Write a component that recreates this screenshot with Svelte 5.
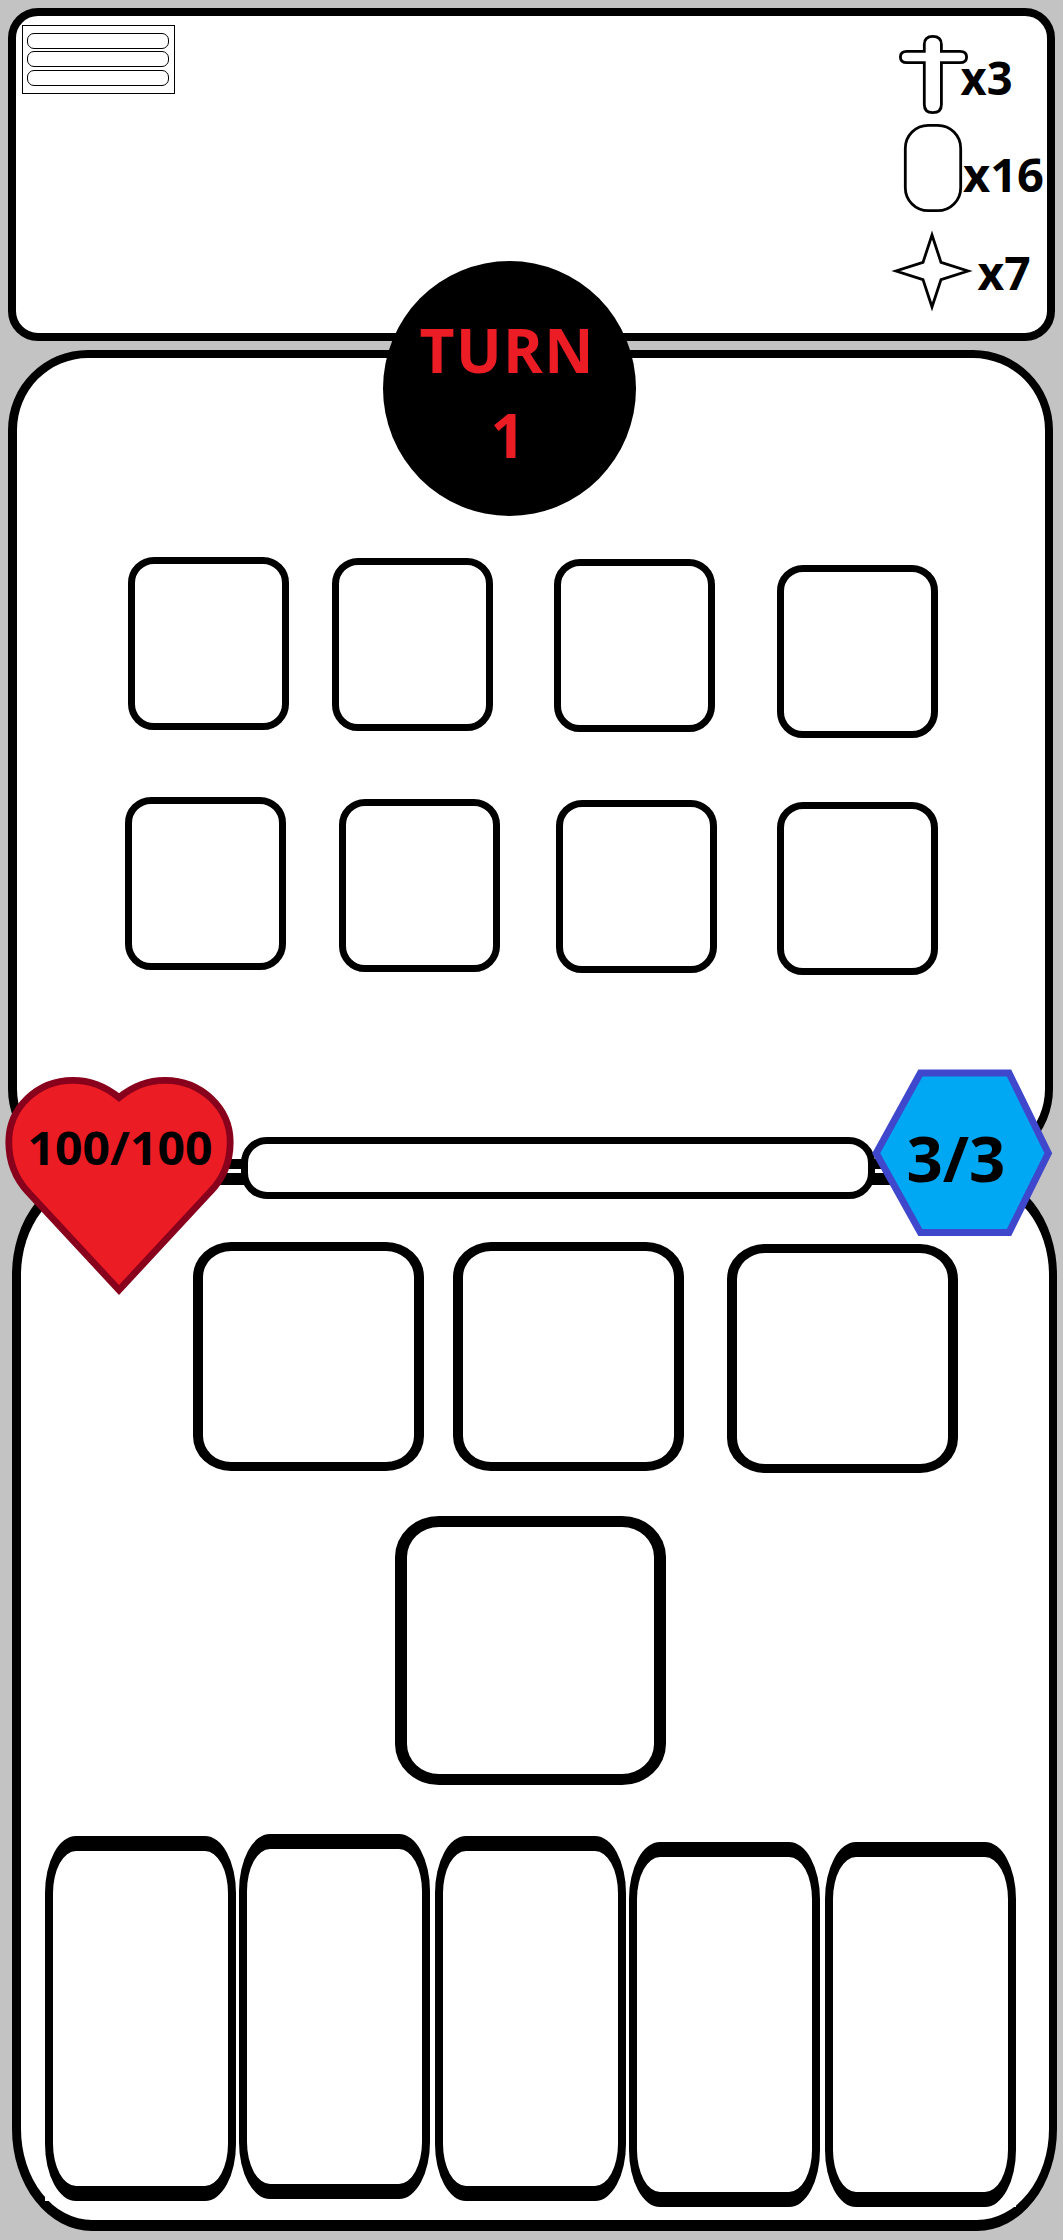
<script>
  // Each tile: space to its left and how far it hangs below the row's top line.
  const enemyRows = [
    [
      { gap: 111, drop: 0 },
      { gap: 43, drop: 1 },
      { gap: 61, drop: 2 },
      { gap: 62, drop: 8 },
    ],
    [
      { gap: 108, drop: 0 },
      { gap: 53, drop: 2 },
      { gap: 56, drop: 3 },
      { gap: 60, drop: 5 },
    ],
  ];

  const slots = [
    { gap: 172, drop: 0 },
    { gap: 29, drop: 0 },
    { gap: 43, drop: 2 },
  ];

  const cards = [
    { gap: 24, drop: 2 },
    { gap: 3, drop: 0 },
    { gap: 5, drop: 2 },
    { gap: 3, drop: 8 },
    { gap: 5, drop: 8 },
  ];

  const turn = 1;
  const health = '100/100';
  const energy = '3/3';
</script>

<main class="game">
  <header class="top">
    <button class="menu" aria-label="Menu">
      <span class="line"></span>
      <span class="line"></span>
      <span class="line last"></span>
    </button>

    <div class="resources">
      <svg class="resource" viewBox="887 32 160 86" height="86">
        <path
          class="icon"
          d="M924.3 51.3V44.5Q924.3 36.4 932.8 36.4Q941.4 36.4 941.4 44.5V51.3H960Q966.6 51.3 966.6 57Q966.6 62.7 960 62.7H941.4V104.5Q941.4 112.6 932.8 112.6Q924.3 112.6 924.3 104.5V62.7H907Q900.4 62.7 900.4 57Q900.4 51.3 907 51.3Z"
        />
        <text x="960.5" y="94.5" textLength="52" lengthAdjust="spacingAndGlyphs">x3</text>
      </svg>
      <svg class="resource" viewBox="887 118 160 100" height="100">
        <rect class="icon" x="905.3" y="125.3" width="55.4" height="85.4" rx="23" ry="23" />
        <text x="963" y="191.5" textLength="81" lengthAdjust="spacingAndGlyphs">x16</text>
      </svg>
      <svg class="resource" viewBox="887 218 160 100" height="100">
        <path class="icon" d="M932 235L941 262.4L968 271L941 279.6L932 307L923 279.6L896 271L923 262.4Z" />
        <text x="977.5" y="289.5" textLength="53" lengthAdjust="spacingAndGlyphs">x7</text>
      </svg>
    </div>
  </header>

  <section class="board">
    {#each enemyRows as row}
      <div class="row">
        {#each row as tile}
          <div class="tile" style:margin-left="{tile.gap}px" style:margin-top="{tile.drop}px"></div>
        {/each}
      </div>
    {/each}
  </section>

  <div class="seam"></div>

  <section class="hand">
    <div class="row">
      {#each slots as slot}
        <div class="slot" style:margin-left="{slot.gap}px" style:margin-top="{slot.drop}px"></div>
      {/each}
    </div>
    <div class="active"></div>
    <div class="row">
      {#each cards as card}
        <div class="card" style:margin-left="{card.gap}px" style:margin-top="{card.drop}px">
          <div class="face"></div>
        </div>
      {/each}
    </div>
  </section>

  <svg class="turn" viewBox="383 261 253 255">
    <ellipse cx="509.5" cy="388.5" rx="126.5" ry="127.5" />
    <text x="419.5" y="372.5" textLength="174">TURN</text>
    <text x="490.5" y="457.5">{turn}</text>
  </svg>

  <div class="gauge"></div>

  <svg class="heart" viewBox="0 1070 240 230">
    <path
      d="M119 1097.5C105 1086 91 1080.3 73 1080.3C37 1080.3 8.8 1108 8.8 1142C8.8 1162 16 1179 28 1192L119 1290L210 1192C223 1179 230.2 1162 230.2 1142C230.2 1108 201 1080.3 165 1080.3C147 1080.3 133 1086 119 1097.5Z"
    />
    <text x="27.5" y="1164.5" textLength="185" lengthAdjust="spacingAndGlyphs">{health}</text>
  </svg>

  <svg class="energy" viewBox="868 1064 190 178">
    <path d="M920.4 1073H1009L1048.3 1153.2L1009 1232.6H920.4L876.2 1153.2Z" />
    <text x="906.5" y="1181.5">{energy}</text>
  </svg>
</main>

<style>
  :global(body) {
    background: #c3c3c3;
  }

  .game {
    position: relative;
    box-sizing: border-box;
    width: 1063px;
    height: 2240px;
    padding-top: 8px;
    background: #c3c3c3;
    font-family: 'Open Sans', 'Noto Sans', sans-serif;
    font-weight: 700;
    overflow: hidden;
  }

  .game * {
    box-sizing: border-box;
  }

  .top {
    display: flex;
    justify-content: space-between;
    align-items: flex-start;
    width: 1047px;
    height: 333px;
    margin-left: 8px;
    border: 8px solid #000;
    border-radius: 30px;
    background: #fff;
  }

  .menu {
    display: flex;
    flex-direction: column;
    gap: 2px;
    width: 153px;
    height: 69px;
    margin: 9px 0 0 6px;
    padding: 7px 5px 0 4px;
    border: 1px solid #000;
    border-radius: 0;
    background: #fff;
  }

  .line {
    height: 16px;
    border: 1px solid #000;
    border-radius: 7px;
  }

  .line.last {
    margin-top: 1px;
  }

  .resources {
    display: flex;
    flex-direction: column;
    padding-top: 16px;
  }

  .resource {
    display: block;
    width: 160px;
    font-size: 47px;
  }

  .icon {
    fill: #fff;
    stroke: #000;
    stroke-width: 2.8;
    stroke-miterlimit: 10;
  }

  .board {
    display: flex;
    flex-direction: column;
    gap: 59px;
    width: 1045px;
    height: 819px;
    margin: 9px 0 0 8px;
    padding-top: 199px;
    border: solid #000;
    border-width: 8px 8px 10px 9px;
    border-radius: 80px;
    background: #fff;
  }

  .row {
    display: flex;
    align-items: flex-start;
  }

  .tile {
    flex: none;
    width: 161px;
    height: 173px;
    border: 7px solid #000;
    border-radius: 26px;
  }

  .seam {
    width: 800px;
    height: 4px;
    margin-left: 120px;
    background: #fff;
  }

  .hand {
    width: 1045px;
    height: 1058px;
    margin-left: 12px;
    padding-top: 57px;
    border: solid #000;
    border-width: 12px 8px 11px 9px;
    border-radius: 80px / 102px;
    background: #fff;
  }

  .slot {
    flex: none;
    width: 231px;
    height: 229px;
    border: solid #000;
    border-width: 9px 10px;
    border-radius: 38px / 35px;
  }

  .active {
    width: 271px;
    height: 269px;
    margin: 43px 0 49px 374px;
    border: solid #000;
    border-width: 11px 12px;
    border-radius: 44px / 41px;
  }

  .card {
    flex: none;
    width: 191px;
    height: 365px;
    background: #fff;
  }

  .face {
    height: 100%;
    border: solid #000;
    border-width: 15px 8px;
    border-radius: 31px / 57px;
  }

  .turn {
    position: absolute;
    top: 261px;
    left: 383px;
    width: 253px;
    height: 255px;
    font-size: 60.5px;
  }

  .turn text {
    fill: #ec1c24;
  }

  .gauge {
    position: absolute;
    top: 1137px;
    left: 241px;
    width: 634px;
    height: 62px;
    border: 7px solid #000;
    border-radius: 26px;
    background: #fff;
  }

  .heart {
    position: absolute;
    top: 1070px;
    left: 0;
    width: 240px;
    height: 230px;
    font-size: 47px;
  }

  .heart path {
    fill: #ec1c24;
    stroke: #88001b;
    stroke-width: 6.8;
  }

  .energy {
    position: absolute;
    top: 1064px;
    left: 868px;
    width: 190px;
    height: 178px;
    font-size: 63.5px;
  }

  .energy path {
    fill: #00a8f3;
    stroke: #3f48cc;
    stroke-width: 7;
  }
</style>
